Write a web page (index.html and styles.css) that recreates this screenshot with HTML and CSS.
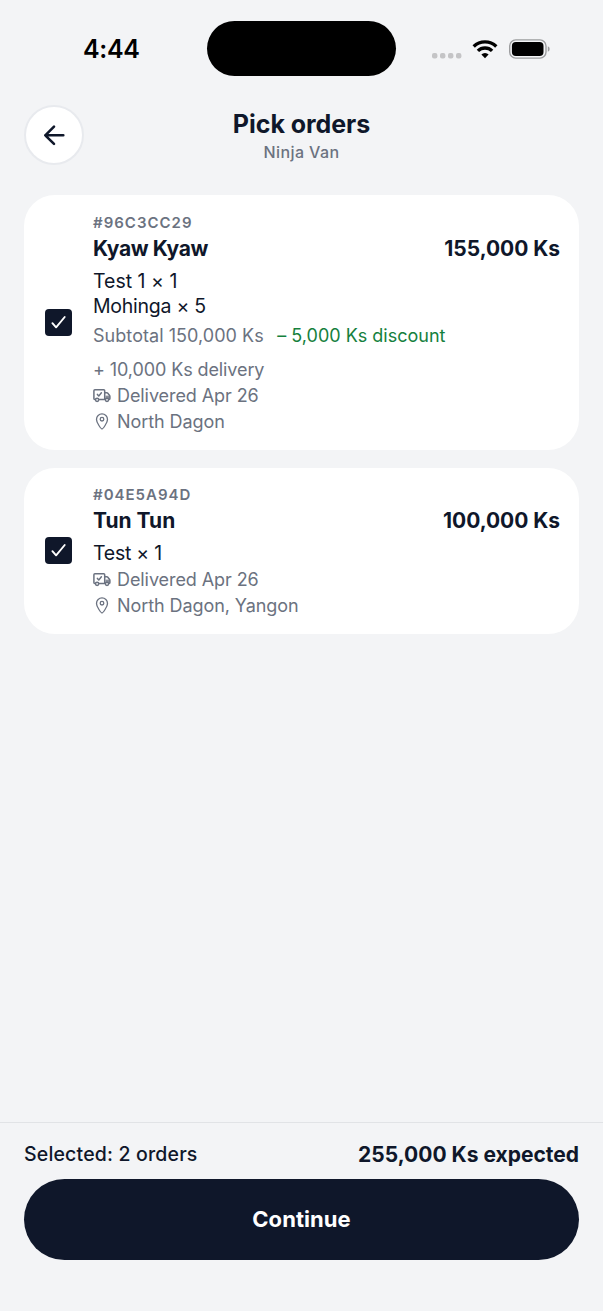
FILE: index.html
```html
<!DOCTYPE html>
<html lang="en">
<head>
<meta charset="utf-8">
<title>Pick orders</title>
<link rel="stylesheet" href="styles.css">
</head>
<body>
<svg class="defs" aria-hidden="true">
  <symbol id="check" viewBox="0 0 27 27"><path d="M7.400 14.200l3.700 4.100 8.600-10.300" fill="none" stroke="#fff" stroke-width="1.900" stroke-linecap="round" stroke-linejoin="round"/></symbol>
  <symbol id="truck" viewBox="0 0 18 18">
    <g fill="none" stroke="currentColor" stroke-width="1.500" stroke-linejoin="round" stroke-linecap="round">
      <path d="M1.900 12.500Q.9 12.300.9 11.400V3.800q0-1 1-1h8.800q1 0 1 1v8.700H6.200"/>
      <path d="M11.700 5.800h2.100q.6 0 1 .5l1.800 2.200q.3.400.3.900v2.200q0 .8-.8.800"/>
      <circle cx="4.100" cy="12.800" r="1.600"/><circle cx="14" cy="12.800" r="1.600"/>
      <path d="M4.400 7.400l1.400 1.500 2.600-3.100"/>
    </g>
    <path d="M12.500 8.600h4.300v3.200h-4.300z" fill="currentColor" opacity=".8"/>
  </symbol>
  <symbol id="pin" viewBox="0 0 18 18">
    <g fill="none" stroke="currentColor" stroke-width="1.300" stroke-linejoin="round">
      <path d="M9 16C8.200 16 3.500 9.900 3.500 6.400C3.500 3.200 6 .9 9 .9S14.500 3.200 14.500 6.400C14.500 9.900 9.800 16 9 16Z"/>
      <circle cx="9" cy="6.200" r="1.800"/>
    </g>
  </symbol>
</svg>
<div class="screen">
  <div class="status">
    <span class="time">4:44</span>
    <div class="island"></div>
    <svg class="indicators" viewBox="0 0 120 24" width="120" height="24">
      <g fill="#c4c4c6"><rect x="2" y="15" width="5.400" height="5.400" rx="2"/><rect x="10" y="15" width="5.400" height="5.400" rx="2"/><rect x="18" y="15" width="5.400" height="5.400" rx="2"/><rect x="26" y="15" width="5.400" height="5.400" rx="2"/></g>
      <g fill="none" stroke="#000" stroke-width="3.400"><path d="M43.700 8.400a16.400 16.400 0 0 1 22.600 0"/><path d="M47.900 12.900a10.200 10.200 0 0 1 14.200 0"/></g>
      <path d="M55 20.200l-3.600-3.700a4.900 4.900 0 0 1 7.200 0z"/>
      <rect x="79.700" y="1.900" width="36.300" height="18.200" rx="6" fill="none" stroke="#9c9d9f" stroke-width="1.400"/>
      <rect x="81.900" y="4" width="31.600" height="14" rx="4"/>
      <path d="M117.800 8.200q1.900.8 1.900 2.800t-1.900 2.800z" fill="#9c9d9f"/>
    </svg>
  </div>
  <header class="header">
    <button class="back" aria-label="Back"><svg viewBox="0 0 24 24" width="24" height="24"><path d="M21.300 12.300H3.300M12 3.700l-8.700 8.600 8.700 8.600" fill="none" stroke="#0f172a" stroke-width="2.600" stroke-linecap="round" stroke-linejoin="round"/></svg></button>
    <div class="heading"><h1 class="title">Pick orders</h1><p class="subtitle">Ninja Van</p></div>
  </header>
  <main class="orders">
    <article class="card first">
      <span class="box"><svg width="27" height="27"><use href="#check"/></svg></span>
      <div class="body">
        <div class="id">#96C3CC29</div>
        <div class="row"><span class="name">Kyaw Kyaw</span><span class="amount">155,000 Ks</span></div>
        <div class="items"><div>Test 1 × 1</div><div class="narrow">Mohinga × 5</div></div>
        <div class="costs"><span class="subtotal">Subtotal 150,000 Ks</span><span class="discount">– 5,000 Ks discount</span><span>+ 10,000 Ks delivery</span></div>
        <div class="meta"><svg class="icon"><use href="#truck"/></svg><span>Delivered Apr 26</span></div>
        <div class="meta"><svg class="icon"><use href="#pin"/></svg><span>North Dagon</span></div>
      </div>
    </article>
    <article class="card second">
      <span class="box"><svg width="27" height="27"><use href="#check"/></svg></span>
      <div class="body">
        <div class="id">#04E5A94D</div>
        <div class="row"><span class="name name-short">Tun Tun</span><span class="amount">100,000 Ks</span></div>
        <div class="items"><div class="narrow">Test × 1</div></div>
        <div class="meta"><svg class="icon"><use href="#truck"/></svg><span>Delivered Apr 26</span></div>
        <div class="meta"><svg class="icon"><use href="#pin"/></svg><span>North Dagon, Yangon</span></div>
      </div>
    </article>
  </main>
  <footer class="footer">
    <div class="summary"><span class="selected">Selected: 2 orders</span><span class="expected">255,000 Ks expected</span></div>
    <button class="continue">Continue</button>
  </footer>
</div>
</body>
</html>
```
FILE: styles.css
```css
* { box-sizing: border-box; margin: 0; padding: 0; }
body { background: #f3f4f6; color: #0f172a; font-family: Inter, "Liberation Sans", sans-serif; font-feature-settings: "calt" 0; }
button { font-family: inherit; }
.defs { position: absolute; width: 0; height: 0; }
.screen { width: 603px; height: 1311px; display: flex; flex-direction: column; overflow: hidden; }
.status { height: 76px; padding-top: 21px; display: grid; grid-template-columns: 207px 189px 1fr; flex: none; }
.time { padding-left: 83px; color: #000; font-size: 25px; font-weight: 600; line-height: 57px; letter-spacing: -.3px; }
.island { height: 55px; border-radius: 28px; background: #000; }
.indicators { margin: 17px 0 0 34px; }
.header { display: grid; grid-template-columns: 60px 1fr 60px; padding: 29px 24px 0; height: 119px; flex: none; }
.back { width: 60px; height: 60px; border-radius: 50%; background: #fff; border: 2px solid #e8eaee; display: flex; align-items: center; justify-content: center; }
.heading { text-align: center; padding-top: 3px; }
.title { font-size: 25px; font-weight: 700; line-height: 32px; letter-spacing: -.05px; }
.subtitle { font-size: 16px; font-weight: 500; line-height: 20px; margin-top: 2px; letter-spacing: .4px; color: #6b7280; }
.orders { padding: 0 24px; display: flex; flex-direction: column; gap: 18px; flex: 1; }
.card { background: #fff; border-radius: 31px; display: grid; grid-template-columns: 27px 1fr; column-gap: 21px; padding: 18px 19px 0 21px; align-items: start; width: 555px; }
.first { height: 254.500px; }
.second { height: 166.500px; padding-top: 17.400px; }
.box { width: 27px; height: 27px; border-radius: 4px; background: #0f172a; display: flex; }
.first .box { margin-top: 96px; }
.second .box { margin-top: 52.600px; }
.id { font-size: 15px; font-weight: 600; line-height: 20px; color: #6b7280; letter-spacing: 1px; }
.row { display: flex; justify-content: space-between; line-height: 32px; font-size: 21px; font-weight: 700; }
.name { letter-spacing: -.4px; }
.name-short { letter-spacing: 0; }
.amount { letter-spacing: -.05px; }
.items { font-size: 19.500px; line-height: 25px; padding: 4px 0 1px; }
.second .items { padding-bottom: 1.600px; }
.narrow { letter-spacing: -.25px; }
.costs { display: flex; flex-wrap: wrap; column-gap: 13.500px; row-gap: 8px; font-size: 18px; line-height: 26px; padding-top: 3px; color: #6b7280; letter-spacing: -.1px; }
.subtotal { letter-spacing: .05px; }
.discount { color: #15803d; letter-spacing: 0; }
.meta { display: flex; align-items: center; gap: 6px; height: 26px; font-size: 18px; line-height: 26px; letter-spacing: -.08px; color: #6b7280; }
.icon { width: 18px; height: 18px; }
.footer { height: 189px; border-top: 1.500px solid #e1e3e6; padding: 17px 24px 0; flex: none; }
.summary { display: flex; justify-content: space-between; align-items: center; height: 28px; }
.selected { font-size: 19.500px; font-weight: 500; letter-spacing: .17px; }
.expected { font-size: 21px; font-weight: 700; letter-spacing: 0; }
.continue { display: block; margin-top: 11px; width: 555px; height: 81px; padding-bottom: 2px; border: 0; border-radius: 41px; background: #0f172a; color: #fff; font-size: 22px; font-weight: 700; letter-spacing: .05px; }
```
